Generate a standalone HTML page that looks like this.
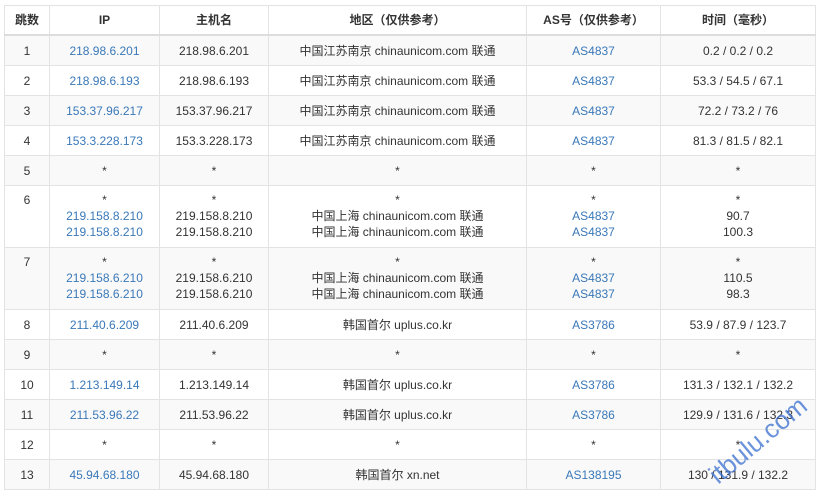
<!DOCTYPE html>
<html><head><meta charset="utf-8"><style>
body{margin:0;background:#fff;width:820px;height:497px;overflow:hidden;font-family:"Liberation Sans","Noto Sans CJK SC",sans-serif;font-size:12px;color:#333}
table{position:absolute;left:4px;top:5px;border-collapse:collapse;table-layout:fixed;width:811px}
td,th{border:1px solid #e3e3e3;text-align:center;padding:0;line-height:16px}
th{font-weight:bold;height:28px;border-bottom:2px solid #ddd}
tr.g td{background:#f9f9f9}
td{height:29px}
tr.t td{height:55px;vertical-align:top;padding-top:6px}
.b{color:#3a78b8}
.k{color:#333}
.wm{position:absolute;left:704px;top:468px;color:#3a6fd0;font-size:26px;transform:rotate(-40deg);transform-origin:left top;opacity:.75;font-family:"Liberation Sans",sans-serif;line-height:1}
</style></head><body>
<table>
<colgroup><col style="width:45px"><col style="width:110px"><col style="width:109px"><col style="width:258px"><col style="width:134px"><col style="width:155px"></colgroup>
<tr><th>跳数</th><th>IP</th><th>主机名</th><th>地区（仅供参考）</th><th>AS号（仅供参考）</th><th>时间（毫秒）</th></tr>
<tr class="g"><td>1</td><td class="b">218.98.6.201</td><td>218.98.6.201</td><td>中国江苏南京 chinaunicom.com 联通</td><td class="b">AS4837</td><td>0.2 / 0.2 / 0.2</td></tr>
<tr><td>2</td><td class="b">218.98.6.193</td><td>218.98.6.193</td><td>中国江苏南京 chinaunicom.com 联通</td><td class="b">AS4837</td><td>53.3 / 54.5 / 67.1</td></tr>
<tr class="g"><td>3</td><td class="b">153.37.96.217</td><td>153.37.96.217</td><td>中国江苏南京 chinaunicom.com 联通</td><td class="b">AS4837</td><td>72.2 / 73.2 / 76</td></tr>
<tr><td>4</td><td class="b">153.3.228.173</td><td>153.3.228.173</td><td>中国江苏南京 chinaunicom.com 联通</td><td class="b">AS4837</td><td>81.3 / 81.5 / 82.1</td></tr>
<tr class="g"><td>5</td><td>*</td><td>*</td><td>*</td><td>*</td><td>*</td></tr>
<tr class="t"><td>6</td><td class="b"><span class="k">*</span><br>219.158.8.210<br>219.158.8.210</td><td>*<br>219.158.8.210<br>219.158.8.210</td><td>*<br>中国上海 chinaunicom.com 联通<br>中国上海 chinaunicom.com 联通</td><td class="b"><span class="k">*</span><br>AS4837<br>AS4837</td><td>*<br>90.7<br>100.3</td></tr>
<tr class="t g"><td>7</td><td class="b"><span class="k">*</span><br>219.158.6.210<br>219.158.6.210</td><td>*<br>219.158.6.210<br>219.158.6.210</td><td>*<br>中国上海 chinaunicom.com 联通<br>中国上海 chinaunicom.com 联通</td><td class="b"><span class="k">*</span><br>AS4837<br>AS4837</td><td>*<br>110.5<br>98.3</td></tr>
<tr><td>8</td><td class="b">211.40.6.209</td><td>211.40.6.209</td><td>韩国首尔 uplus.co.kr</td><td class="b">AS3786</td><td>53.9 / 87.9 / 123.7</td></tr>
<tr class="g"><td>9</td><td>*</td><td>*</td><td>*</td><td>*</td><td>*</td></tr>
<tr><td>10</td><td class="b">1.213.149.14</td><td>1.213.149.14</td><td>韩国首尔 uplus.co.kr</td><td class="b">AS3786</td><td>131.3 / 132.1 / 132.2</td></tr>
<tr class="g"><td>11</td><td class="b">211.53.96.22</td><td>211.53.96.22</td><td>韩国首尔 uplus.co.kr</td><td class="b">AS3786</td><td>129.9 / 131.6 / 132.3</td></tr>
<tr><td>12</td><td>*</td><td>*</td><td>*</td><td>*</td><td>*</td></tr>
<tr class="g"><td>13</td><td class="b">45.94.68.180</td><td>45.94.68.180</td><td>韩国首尔 xn.net</td><td class="b">AS138195</td><td>130 / 131.9 / 132.2</td></tr>
</table>
<div class="wm">itbulu.com</div>
</body></html>
